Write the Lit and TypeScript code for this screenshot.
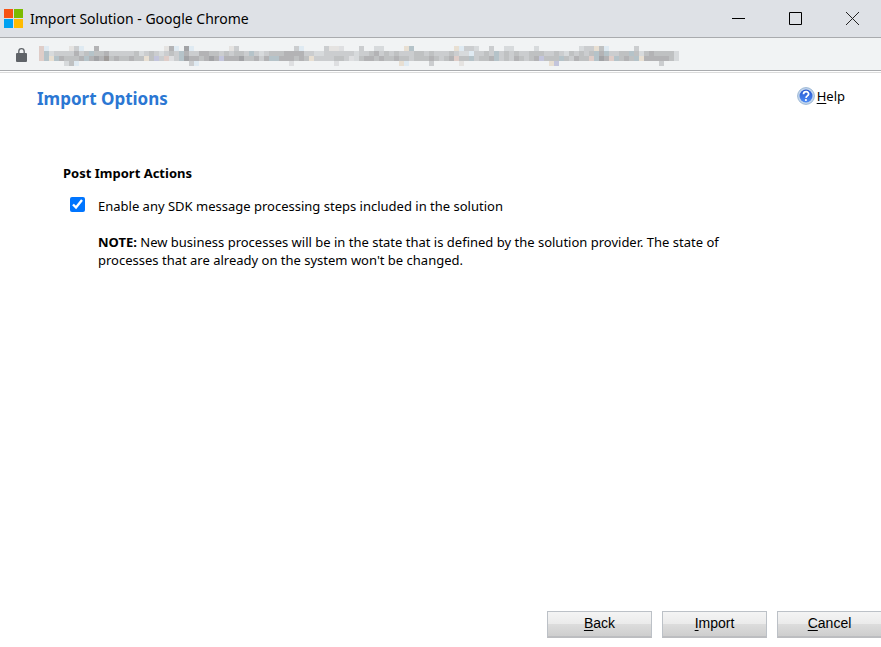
import { LitElement, html, css, svg } from "lit";
import { customElement } from "lit/decorators.js";

// The redacted address in 5px cells. Each block is 32 columns wide and four rows high.
const MOSAIC = [
  [
    "pl....hel..c.............hcl.bl.",
    "pkfeeeecedkddceeeeedfedefedekcee",
    "pkykcdddckcbcadcddcddydvepgekbcc",
    ".....fdl......................el",
  ],
  [
    "......he...........el....ehhg...",
    "ccddededdekefedddcccceeffeeeeeef",
    "dcbcvcccbddceckkcccdcdyeeeeddegf",
    "..................g........g....",
  ],
  [
    "e..ff....yk........yleef..e..ff.",
    "eedcededeeeddedeeedeffleedekeded",
    "dccdcddcddedddcdedcpddkeddckedec",
    "........yl....e.....h...........",
  ],
  [
    "...f........feeydl.....e........",
    "eedddeedefdededkckeeddkdfdcddddf",
    "dedcvdddkdecddpkbcpkdcdkycccccdf",
    "......yv....................e...",
  ],
];
const SHADES: Record<string, string> = {
  a: "#9f9b99", b: "#a2a3a6", c: "#b3b3b5", d: "#bfc1c2", e: "#cbcdcf", f: "#d7dadc",
  g: "#dedfe1", h: "#e5e3e1", p: "#dfcdc8", l: "#dfeaf2", k: "#b5c3c9", y: "#e8dfd2", v: "#c3c5dc",
};

@customElement("app-root")
export class AppRoot extends LitElement {
  static styles = css`
    :host {
      display: flex;
      flex-direction: column;
      min-height: 100vh;
      box-sizing: border-box;
      overflow: hidden;
      background: #fff;
      color: #000;
      font: 13px/18px "Segoe UI", "Noto Sans", sans-serif;
    }
    svg { display: block; flex: none; }
    .titlebar {
      display: flex;
      align-items: center;
      height: 37px;
      padding-left: 4px;
      gap: 7px;
      background: #dee1e6;
      border-bottom: 1px solid #a9abae;
      font-size: 14px;
    }
    .title { flex: 1; font-weight: 400; }
    .controls { display: flex; }
    .control {
      display: grid;
      place-items: center;
      width: 57px;
      height: 37px;
      padding: 0;
      border: 0;
      background: none;
    }
    .address {
      display: flex;
      align-items: center;
      height: 28px;
      padding: 4px 0 0 16px;
      gap: 12px;
      background: #f1f3f4;
      border-bottom: 1px solid #a9abae;
    }
    .edge { height: 1px; border-bottom: 1px solid #dcdcdc; }
    .head {
      display: flex;
      justify-content: space-between;
      align-items: flex-start;
      padding: 14px 36px 0 37px;
    }
    h1 { margin: 0; font-size: 17px; line-height: 24px; font-weight: 700; color: #2b77d3; }
    .help { display: flex; align-items: center; gap: 2px; color: #000; text-decoration: none; }
    u { text-underline-offset: 2px; }
    main { flex: 1; padding: 53px 63px 0; }
    h2 { margin: 0; font-size: 13px; line-height: 18px; }
    .option { display: flex; gap: 13px; margin-top: 15px; padding-left: 7px; }
    .option input { width: 15px; height: 15px; margin: 0; accent-color: #0075ff; }
    .note { max-width: 650px; margin: 18px 0 0; padding-left: 35px; }
    footer { display: flex; justify-content: flex-end; gap: 10px; padding-bottom: 9px; margin-right: -1px; }
    .action {
      width: 105px;
      height: 27px;
      padding: 0 0 2px;
      border: 1px solid #bcc1c7;
      border-bottom: 2px solid #bcbdc0;
      background: linear-gradient(#f4f4f4, #ebebeb 48%, #dcdcdc 52%, #cecece);
      color: #000;
      font: 14px/18px "Liberation Sans", Arial, sans-serif;
    }
  `;

  private mosaic() {
    return MOSAIC.map((block, b) =>
      block.map((row, r) =>
        [...row].map((c, i) =>
          c === "."
            ? null
            : svg`<rect x=${(b * 32 + i) * 5} y=${r * 5} width="5" height="5" fill=${SHADES[c]} />`)));
  }

  render() {
    return html`
      <header class="titlebar">
        <svg width="19" height="19" viewBox="0 0 19 19" aria-hidden="true">
          <path fill="#f65314" d="M0 0h9v9H0z" /><path fill="#7cbb00" d="M10 0h9v9h-9z" />
          <path fill="#00a1f1" d="M0 10h9v9H0z" /><path fill="#ffbb00" d="M10 10h9v9h-9z" />
        </svg>
        <span class="title">Import Solution - Google Chrome</span>
        <div class="controls">
          <button class="control" aria-label="Minimize">
            <svg width="13" height="13"><path d="M0 6.5h13" stroke="#000" /></svg>
          </button>
          <button class="control" aria-label="Maximize">
            <svg width="13" height="13"><path d="M.5.5h12v12H.5z" fill="none" stroke="#000" /></svg>
          </button>
          <button class="control" aria-label="Close">
            <svg width="13" height="13"><path d="M0 0l13 13M13 0L0 13" stroke="#222" /></svg>
          </button>
        </div>
      </header>
      <div class="address">
        <svg width="11" height="16" viewBox="0 0 11 16" aria-hidden="true">
          <rect y="5" width="11" height="9" rx="1" fill="#5f6368" />
          <path d="M2.8 5.5V3.4a2.7 2.7 0 0 1 5.4 0v2.1" fill="none" stroke="#5f6368" stroke-width="1.3" />
        </svg>
        <svg width="640" height="20" shape-rendering="crispEdges" role="img" aria-label="Redacted address">
          ${this.mosaic()}
        </svg>
      </div>
      <div class="edge"></div>
      <div class="head">
        <h1>Import Options</h1>
        <a class="help" href="#help">
          <svg width="18" height="18" viewBox="0 0 18 18" aria-hidden="true">
            <defs>
              <linearGradient id="ball" x2="0" y2="1"><stop stop-color="#2454cf" /><stop offset="1" stop-color="#4e8cf5" /></linearGradient>
            </defs>
            <circle cx="9" cy="9" r="8.4" fill="#c3d6ec" stroke="#9db8d6" />
            <circle cx="9" cy="9" r="6.5" fill="url(#ball)" />
            <path d="M6.5 7.2c.2-3.5 5.4-3.1 5.1 0-.2 1.8-2.4 1.6-2.6 3.6" fill="none" stroke="#fff" stroke-width="1.8" />
            <circle cx="8.9" cy="13" r="1.1" fill="#fff" />
          </svg>
          <span><u>H</u>elp</span>
        </a>
      </div>
      <main>
        <h2>Post Import Actions</h2>
        <div class="option">
          <input type="checkbox" id="sdk" checked />
          <label for="sdk">Enable any SDK message processing steps included in the solution</label>
        </div>
        <p class="note"><b>NOTE:</b> New business processes will be in the state that is defined by the solution provider. The state of processes that are already on the system won't be changed.</p>
      </main>
      <footer>
        <button class="action"><u>B</u>ack</button>
        <button class="action"><u>I</u>mport</button>
        <button class="action"><u>C</u>ancel</button>
      </footer>
    `;
  }
}
